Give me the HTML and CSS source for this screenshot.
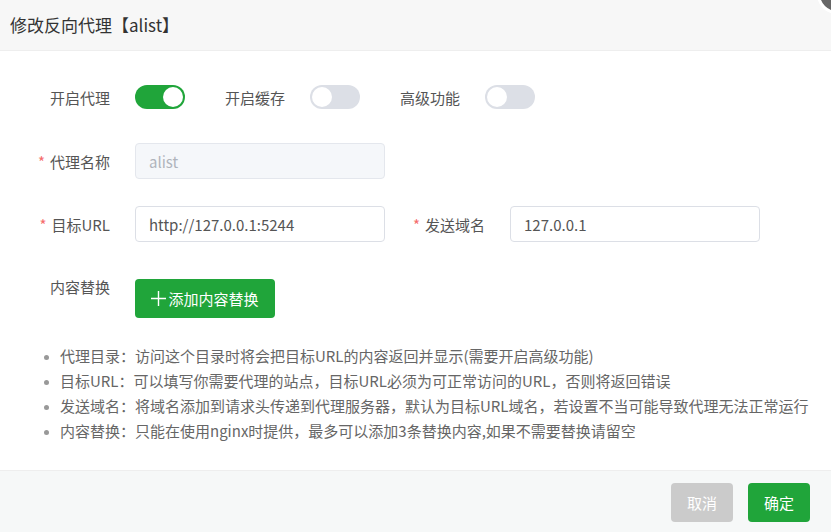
FILE: index.html
```html
<!DOCTYPE html>
<html lang="zh-CN">
<head>
    <meta charset="UTF-8">
    <title>修改反向代理</title>
    <link rel="stylesheet" href="styles.css">
</head>
<body>
    <div class="dialog">
        <div class="dialog-header">修改反向代理【alist】</div>
        <span class="close-btn"></span>
        <div class="dialog-body">
            <div class="form-row">
                <label class="form-label">开启代理</label>
                <span class="switch on"></span>
                <label class="form-label short">开启缓存</label>
                <span class="switch"></span>
                <label class="form-label short">高级功能</label>
                <span class="switch"></span>
            </div>
            <div class="form-row">
                <label class="form-label"><i class="required">*</i>代理名称</label>
                <input class="form-input" type="text" value="alist" disabled>
            </div>
            <div class="form-row">
                <label class="form-label"><i class="required">*</i>目标URL</label>
                <input class="form-input" type="text" value="http://127.0.0.1:5244">
                <label class="form-label mid"><i class="required">*</i>发送域名</label>
                <input class="form-input" type="text" value="127.0.0.1">
            </div>
            <div class="form-row top">
                <label class="form-label">内容替换</label>
                <button class="btn-add">
                    <svg width="15" height="15" viewBox="0 0 15 15"><path d="M7.5 0v15M0 7.5h15" stroke="#fff" stroke-width="1.4" fill="none"/></svg>添加内容替换
                </button>
            </div>
            <ul class="tips">
                <li>代理目录：访问这个目录时将会把目标URL的内容返回并显示(需要开启高级功能)</li>
                <li>目标URL：可以填写你需要代理的站点，目标URL必须为可正常访问的URL，否则将返回错误</li>
                <li>发送域名：将域名添加到请求头传递到代理服务器，默认为目标URL域名，若设置不当可能导致代理无法正常运行</li>
                <li>内容替换：只能在使用nginx时提供，最多可以添加3条替换内容,如果不需要替换请留空</li>
            </ul>
        </div>
        <div class="dialog-footer">
            <button class="btn btn-cancel">取消</button>
            <button class="btn btn-ok">确定</button>
        </div>
    </div>
</body>
</html>
```

FILE: styles.css
```css
body {
    margin: 0;
    font-family: "Noto Sans CJK SC", "Liberation Sans", sans-serif;
    font-size: 15px;
    color: #666;
    background-color: #fff;
    overflow: hidden;
}
.dialog {
    position: relative;
    display: flex;
    flex-direction: column;
    height: 532px;
}
.dialog-header {
    height: 50px;
    line-height: 50px;
    padding-left: 10px;
    font-size: 17px;
    color: #333;
    background-color: #f7f7f7;
    border-bottom: 1px solid #eee;
}
.close-btn {
    position: absolute;
    top: -26px;
    right: -26px;
    width: 34px;
    height: 34px;
    border-radius: 50%;
    background-color: #666;
    border: 3px solid #fff;
}
.dialog-body {
    flex: 1;
    padding-top: 28px;
}
.form-row {
    display: flex;
    align-items: center;
    height: 36px;
    margin-bottom: 28px;
}
.form-row:nth-child(2) {
    margin-bottom: 27px;
}
.form-row:nth-child(3) {
    margin-bottom: 37px;
}
.form-row.top {
    align-items: flex-start;
    height: 39px;
    margin-bottom: 25px;
}
.form-row.top .form-label {
    line-height: 16px;
}
.form-label {
    width: 110px;
    padding-right: 25px;
    text-align: right;
    color: #555;
    flex-shrink: 0;
}
.form-label.short {
    width: 60px;
    margin-left: 40px;
}
.form-label.mid {
    width: 100px;
}
.required {
    font-style: normal;
    color: #f56c6c;
    margin-right: 5px;
}
.switch {
    position: relative;
    width: 50px;
    height: 24px;
    border-radius: 12px;
    background-color: #dcdfe6;
    flex-shrink: 0;
}
.switch::after {
    content: "";
    position: absolute;
    top: 2px;
    left: 2px;
    width: 20px;
    height: 20px;
    border-radius: 50%;
    background-color: #fff;
}
.switch.on {
    background-color: #20a53a;
}
.switch.on::after {
    left: 28px;
}
.form-input {
    box-sizing: border-box;
    width: 250px;
    height: 36px;
    padding: 0 13px;
    border: 1px solid #dcdfe6;
    border-radius: 4px;
    font-family: inherit;
    font-size: 15px;
    color: #555;
    background-color: #fff;
    outline: none;
}
.form-input:disabled {
    background-color: #f5f7fa;
    border-color: #e4e7ed;
    color: #b0b4bc;
}
.btn-add {
    display: flex;
    align-items: center;
    justify-content: center;
    gap: 2px;
    width: 140px;
    height: 39px;
    border: none;
    border-radius: 4px;
    background-color: #20a53a;
    color: #fff;
    font-family: inherit;
    font-size: 15px;
    cursor: pointer;
}
.tips {
    margin: 0;
    padding-left: 60px;
    color: #666;
    font-size: 15px;
    line-height: 25px;
}
.tips li::marker {
    color: #999;
    font-size: 12px;
}
.dialog-footer {
    display: flex;
    justify-content: flex-end;
    align-items: flex-start;
    gap: 15px;
    height: 62px;
    padding: 12px 21px 0 0;
    box-sizing: border-box;
    background-color: #f6f8f8;
    border-top: 1px solid #eee;
}
.btn {
    width: 62px;
    height: 39px;
    border: none;
    border-radius: 4px;
    color: #fff;
    font-family: inherit;
    font-size: 15px;
    cursor: pointer;
}
.btn-cancel {
    background-color: #cbcbcb;
}
.btn-ok {
    background-color: #20a53a;
}
```
